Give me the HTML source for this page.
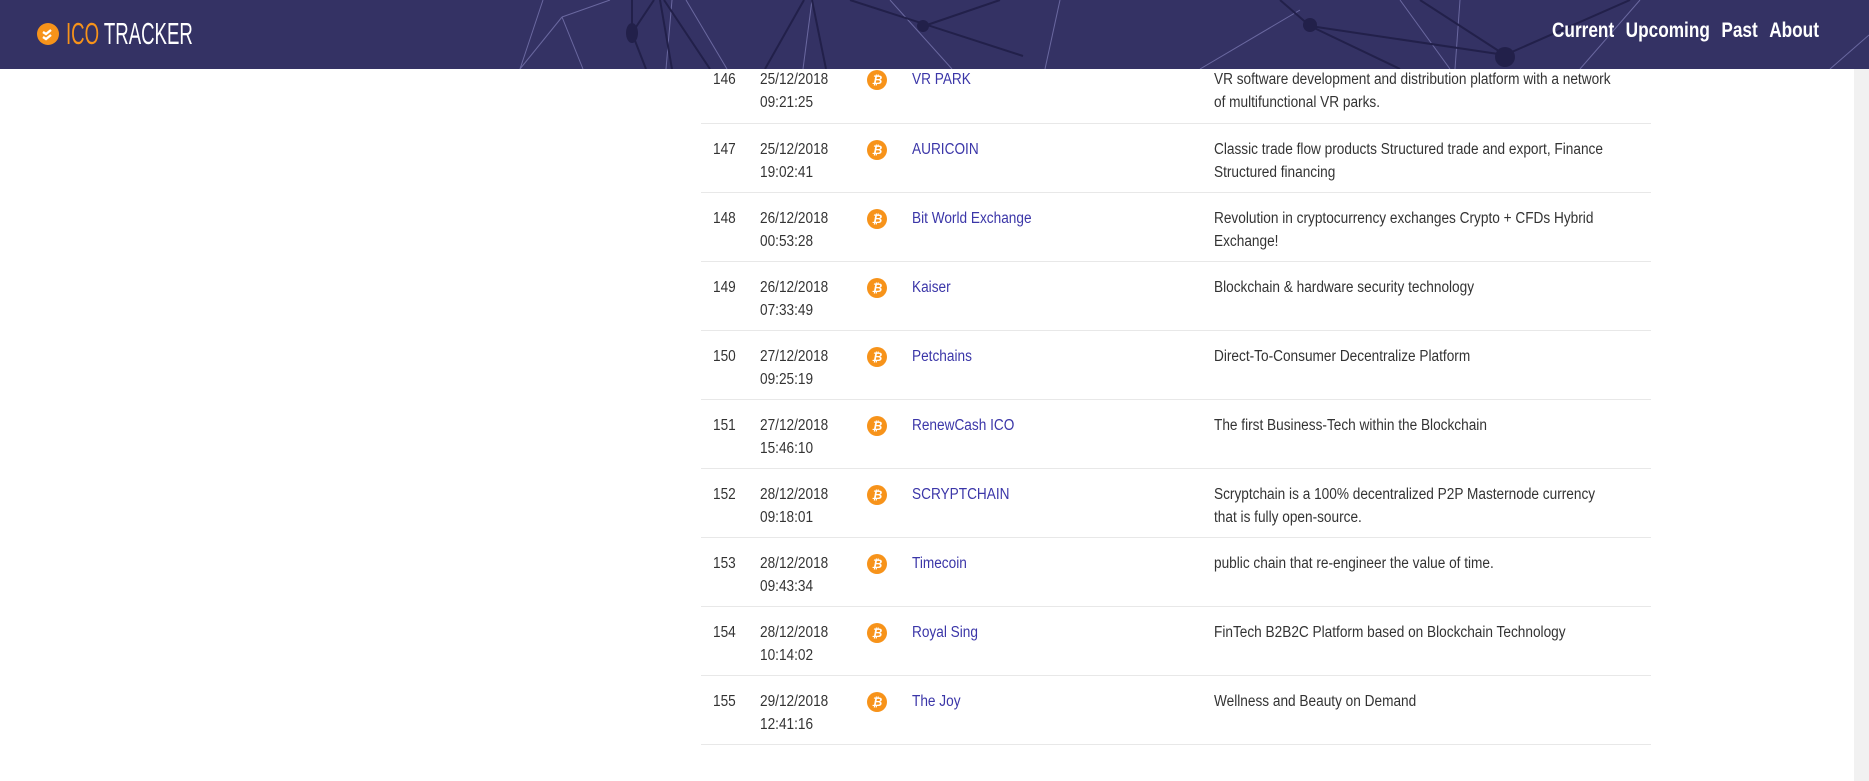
<!DOCTYPE html>
<html><head><meta charset="utf-8"><style>
*{margin:0;padding:0;box-sizing:border-box}
body{width:1869px;height:781px;overflow:hidden;background:#fff;font-family:"Liberation Sans",sans-serif;color:#333;position:relative}
.hdr{position:absolute;left:0;top:0;width:1869px;height:69px;background:#343264;z-index:2;overflow:hidden}
.c{position:absolute;left:37px;top:23px;width:22px;height:22px;border-radius:50%;background:#f7931a}
.logo{position:absolute;left:66px;top:16px;font-size:31px;white-space:nowrap;transform:scaleX(0.6);transform-origin:left}
.nav{position:absolute;left:1552px;top:19px;font-size:21px;color:#fff;font-weight:bold;white-space:nowrap;transform:scaleX(0.82);transform-origin:left}
.nav span{margin-right:14px}
table{position:absolute;left:701px;top:54px;width:950px;border-collapse:collapse;font-size:15.5px;table-layout:fixed}
td{height:69px;border-bottom:1px solid #e8e8e8;vertical-align:top;padding-top:14px;line-height:23px;overflow:visible}
td>div{transform:scaleX(0.88);transform-origin:left;white-space:nowrap}
td.ds>div{white-space:normal;width:452px}
td.n{width:59px;padding-left:12px}
td.d{width:107px}
td.i{width:45px}
td.nm{width:302px;color:#3b36a8}
.b{display:inline-block;width:20px;height:20px;border-radius:50%;background:#f7931a;color:#fff;font-size:12px;font-weight:bold;text-align:center;line-height:20px;margin-top:2px;font-style:italic}
.sb{position:absolute;right:0;top:69px;width:15px;height:712px;background:#f1f1f1}
</style></head><body>
<div class="hdr">
<svg width="1869" height="69" style="position:absolute;left:0;top:0">
<g stroke="#6a68a0" stroke-width="1" fill="none">
<line x1="543" y1="0" x2="520" y2="69"/><line x1="562" y1="17" x2="520" y2="69"/><line x1="562" y1="17" x2="583" y2="69"/><line x1="562" y1="17" x2="610" y2="0"/>
<line x1="672" y1="0" x2="666" y2="69"/><line x1="686" y1="0" x2="727" y2="69"/><line x1="812" y1="0" x2="803" y2="69"/>
<line x1="890" y1="0" x2="952" y2="69"/><line x1="1060" y1="0" x2="1045" y2="69"/><line x1="1200" y1="69" x2="1300" y2="10"/>
<line x1="1400" y1="0" x2="1450" y2="69"/><line x1="1460" y1="0" x2="1455" y2="69"/><line x1="1640" y1="0" x2="1580" y2="69"/><line x1="1869" y1="35" x2="1830" y2="69"/>
</g>
<g stroke="#22204a" stroke-width="2" fill="none">
<line x1="632" y1="0" x2="632" y2="33"/><line x1="632" y1="33" x2="654" y2="0"/><line x1="632" y1="33" x2="646" y2="69"/>
<line x1="660" y1="0" x2="672" y2="69"/><line x1="664" y1="0" x2="710" y2="69"/>
<line x1="804" y1="0" x2="765" y2="69"/><line x1="812" y1="0" x2="826" y2="69"/>
<line x1="850" y1="0" x2="1023" y2="56"/><line x1="1000" y1="0" x2="924" y2="26"/><line x1="1310" y1="26" x2="1505" y2="55"/>
<line x1="1310" y1="26" x2="1280" y2="0"/><line x1="1310" y1="26" x2="1400" y2="69"/>
<line x1="1505" y1="55" x2="1630" y2="0"/><line x1="1505" y1="55" x2="1420" y2="0"/>
</g>
<g fill="#22204a"><ellipse cx="632" cy="33" rx="6" ry="10"/><circle cx="923" cy="26" r="6"/><circle cx="1310" cy="25" r="7"/><circle cx="1505" cy="57" r="10"/></g>
</svg>
<div class="c"><svg width="22" height="22"><path d="M6 9l3 2 5-4M6 14l3 2 5-4" stroke="#fff" stroke-width="2.4" fill="none"/></svg></div>
<div class="logo"><span style="color:#f7931a">ICO</span> <span style="color:#fff">TRACKER</span></div>
<div class="nav"><span>Current</span><span>Upcoming</span><span>Past</span><span>About</span></div>
</div>
<table>
<tr><td class="n"><div>146</div></td><td class="d"><div>25/12/2018<br>09:21:25</div></td><td class="i"><span class="b">₿</span></td><td class="nm"><div>VR PARK</div></td><td class="ds"><div>VR software development and distribution platform with a network of multifunctional VR parks.</div></td></tr>
<tr><td class="n"><div>147</div></td><td class="d"><div>25/12/2018<br>19:02:41</div></td><td class="i"><span class="b">₿</span></td><td class="nm"><div>AURICOIN</div></td><td class="ds"><div>Classic trade flow products Structured trade and export, Finance Structured financing</div></td></tr>
<tr><td class="n"><div>148</div></td><td class="d"><div>26/12/2018<br>00:53:28</div></td><td class="i"><span class="b">₿</span></td><td class="nm"><div>Bit World Exchange</div></td><td class="ds"><div>Revolution in cryptocurrency exchanges Crypto + CFDs Hybrid Exchange!</div></td></tr>
<tr><td class="n"><div>149</div></td><td class="d"><div>26/12/2018<br>07:33:49</div></td><td class="i"><span class="b">₿</span></td><td class="nm"><div>Kaiser</div></td><td class="ds"><div>Blockchain &amp; hardware security technology</div></td></tr>
<tr><td class="n"><div>150</div></td><td class="d"><div>27/12/2018<br>09:25:19</div></td><td class="i"><span class="b">₿</span></td><td class="nm"><div>Petchains</div></td><td class="ds"><div>Direct-To-Consumer Decentralize Platform</div></td></tr>
<tr><td class="n"><div>151</div></td><td class="d"><div>27/12/2018<br>15:46:10</div></td><td class="i"><span class="b">₿</span></td><td class="nm"><div>RenewCash ICO</div></td><td class="ds"><div>The first Business-Tech within the Blockchain</div></td></tr>
<tr><td class="n"><div>152</div></td><td class="d"><div>28/12/2018<br>09:18:01</div></td><td class="i"><span class="b">₿</span></td><td class="nm"><div>SCRYPTCHAIN</div></td><td class="ds"><div>Scryptchain is a 100% decentralized P2P Masternode currency that is fully open-source.</div></td></tr>
<tr><td class="n"><div>153</div></td><td class="d"><div>28/12/2018<br>09:43:34</div></td><td class="i"><span class="b">₿</span></td><td class="nm"><div>Timecoin</div></td><td class="ds"><div>public chain that re-engineer the value of time.</div></td></tr>
<tr><td class="n"><div>154</div></td><td class="d"><div>28/12/2018<br>10:14:02</div></td><td class="i"><span class="b">₿</span></td><td class="nm"><div>Royal Sing</div></td><td class="ds"><div>FinTech B2B2C Platform based on Blockchain Technology</div></td></tr>
<tr><td class="n"><div>155</div></td><td class="d"><div>29/12/2018<br>12:41:16</div></td><td class="i"><span class="b">₿</span></td><td class="nm"><div>The Joy</div></td><td class="ds"><div>Wellness and Beauty on Demand</div></td></tr>
</table>
<div class="sb"></div>
</body></html>
